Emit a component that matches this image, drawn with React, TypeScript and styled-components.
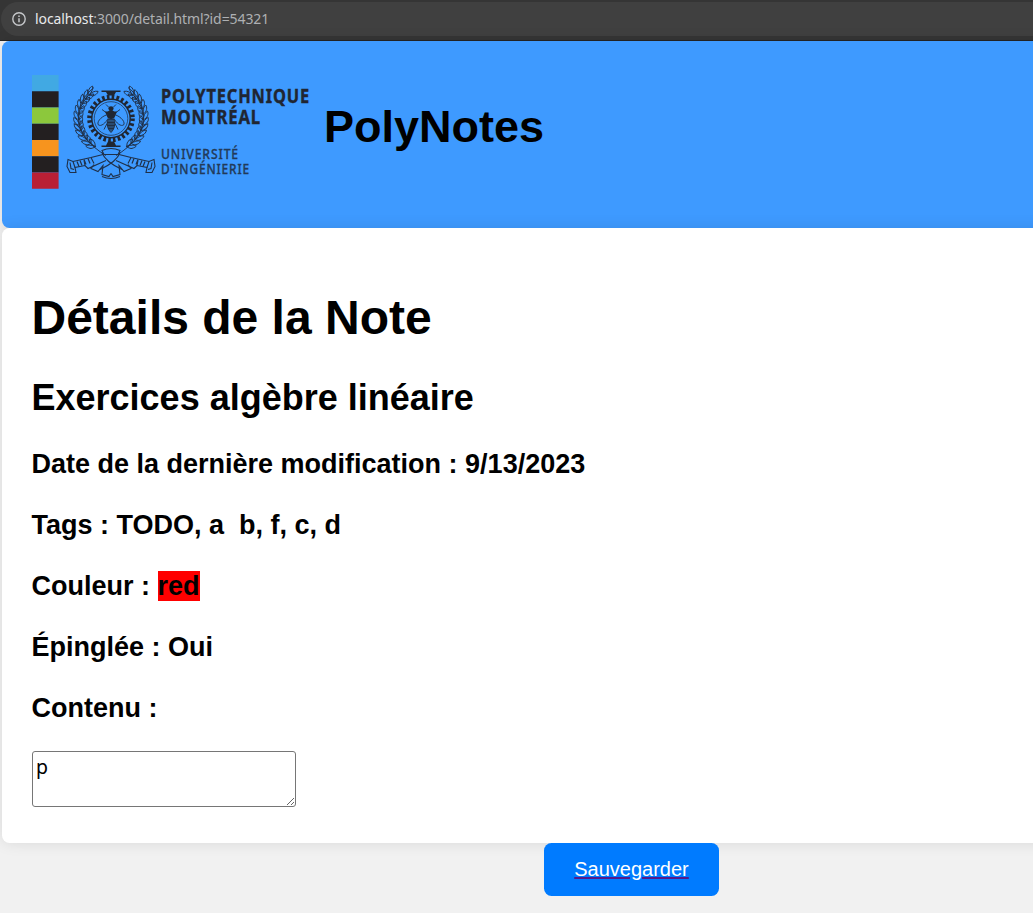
import React from "react";
import styled, { createGlobalStyle } from "styled-components";

const GlobalStyle = createGlobalStyle`
  html, body { margin: 0; padding: 0; }
  body {
    background: #f1f1f1;
    color: #000;
    font-family: "Liberation Sans", Arial, sans-serif;
    overflow: hidden;
  }
`;

const Window = styled.div`
  height: 913px;
  overflow: hidden;
  display: flex;
  flex-direction: column;
`;

const BrowserBar = styled.div`
  flex: none;
  height: 41px;
  box-sizing: border-box;
  padding: 2px 0 4px 1px;
  background: #353535;
  border-bottom: 1px solid #242424;
`;

const AddressField = styled.div`
  height: 34px;
  width: 1100px;
  box-sizing: border-box;
  padding-left: 11px;
  display: flex;
  align-items: center;
  gap: 9px;
  border-radius: 17px;
  background: #404040;
`;

const Url = styled.span`
  font: 14px/20px "Noto Sans", sans-serif;
  letter-spacing: -0.09px;
  color: #aeb0b3;
  white-space: nowrap;
`;

const Host = styled.span`
  color: #e8e9eb;
`;

const Page = styled.div`
  flex: none;
  width: 1259px;
  margin-left: 2px;
`;

const Header = styled.header`
  height: 187px;
  box-sizing: border-box;
  padding: 34px 30px 0;
  display: flex;
  align-items: flex-start;
  border-radius: 7.5px;
  background: #3e9aff;
  box-shadow: 0 0 15px rgba(0, 0, 0, 0.1);
`;

const Brand = styled.h1`
  margin: 26px 0 0 14px;
  font-size: 45px;
  line-height: 52px;
`;

const Card = styled.main`
  height: 615px;
  box-sizing: border-box;
  padding: 62px 30px 0 29.5px;
  border-radius: 7.5px;
  background: #fff;
  box-shadow: 0 0 15px rgba(0, 0, 0, 0.1);
`;

const Title = styled.h1`
  margin: 0 0 32px;
  font-size: 48px;
  line-height: 55px;
`;

const NoteName = styled.h2`
  margin: 0 0 31px;
  font-size: 36px;
  line-height: 41px;
`;

const Field = styled.h3`
  margin: 0 0 30px;
  font-size: 27px;
  line-height: 31px;
  white-space: pre;
`;

const Swatch = styled.span<{ $color: string }>`
  background: ${(p) => p.$color};
`;

const Content = styled.textarea`
  display: block;
  box-sizing: border-box;
  width: 264px;
  height: 56px;
  margin: -3px 0 0 0.5px;
  padding: 3px;
  border: 1px solid #767676;
  border-radius: 3px;
  background: #fff;
  color: #000;
  font: 19.5px/23px "Noto Sans", sans-serif;
  overflow: hidden;
  resize: both;
`;

const Actions = styled.div`
  display: flex;
  justify-content: center;
`;

const SaveButton = styled.button`
  position: relative;
  height: 53px;
  padding: 0 30px;
  border: 0;
  border-radius: 7.5px;
  background: #007bff;
  font: 20px/23px "Liberation Sans", Arial, sans-serif;
`;

const SaveLabel = styled.span`
  color: #fff;
  text-decoration: underline 2px #551a8b;
`;

const LogoSvg = styled.svg`
  flex: none;
  display: block;
  overflow: visible;
`;

const STRIPES = ["#41a9e3", "#231f20", "#8cc83c", "#231f20", "#f7941e", "#231f20", "#b91f35"];

function InfoIcon() {
  return (
    <svg width="14" height="14" viewBox="0 0 14 14" fill="none" stroke="#c5c7ca" strokeWidth="1.4">
      <circle cx="7" cy="7" r="6.2" />
      <path d="M7 6.2v4.1M7 3.5v1.5" strokeWidth="1.5" />
    </svg>
  );
}

function Laurel() {
  const leaves = Array.from({ length: 12 }, (_, i) => {
    const deg = 128 + i * 9.8;
    const a = (deg * Math.PI) / 180;
    const r = 32.5;
    return { x: r * Math.cos(a), y: -r * Math.sin(a), rot: 262 - deg };
  });
  return (
    <g fill="none" stroke="#1f3049" strokeWidth="0.9">
      <path d="M-17 -31C-40 -13 -39 17 -5 37" />
      {leaves.map((l, i) => (
        <g key={i} transform={`translate(${l.x} ${l.y}) rotate(${l.rot})`}>
          <path d="M3 0C1 -5 -4 -5.5 -6 -4C-4 -1 -1 0 3 0Z" />
          <path d="M3 0C1 4.500 -4 5 -6 3.500C-4 1 -1 0 3 0Z" />
        </g>
      ))}
    </g>
  );
}

function Scroll() {
  return (
    <g fill="none" stroke="#1f3049" strokeWidth="1.1">
      <path d="M-8 36L-20 39L-38 43L-43 41L-44 48L-41 54L-35 54L-36 49L-26 47L-23 50L-5 42" />
      <path d="M-38 43L-36 49M-20 39L-17 45M-26 47L-27 42M-41 44L-40 50L-37 51" />
      <path d="M-34 43l2 5m1-6l2 5m2-6l2 5m2-6l2 5" strokeWidth="1.2" />
      <path d="M-9 34C-7 40 -2 45 11 51M-17 46L-20 50L-13 53L-8 47L-9 56L-2 58L0 55" />
    </g>
  );
}

function Logo() {
  return (
    <LogoSvg width="278" height="114" viewBox="32 75 278 114" role="img">
      {STRIPES.map((c, i) => (
        <rect key={i} x="32" y={75 + i * 16.25} width="26.6" height="16.25" fill={c} />
      ))}
      <g transform="translate(111 118.5)">
        <Laurel />
        <g transform="scale(-1 1)">
          <Laurel />
        </g>
        <Scroll />
        <g transform="scale(-1 1)">
          <Scroll />
        </g>
        <path d="M-9 32Q0 28 9 32L7 36H-7ZM-9 58Q0 62 9 58" fill="none" stroke="#1f3049" strokeWidth="1.1" />
        <circle r="21.5" fill="none" stroke="#202632" strokeWidth="4.6" strokeDasharray="2.6 2.225" />
        <circle r="19.200" fill="none" stroke="#202632" strokeWidth="1.400" />
        <circle r="16.800" fill="none" stroke="#20395a" strokeWidth="0.8" />
        <g fill="#202632">
          <path d="M-9.500 -28H9.500V-26.400H5L3 -23H-3L-5 -26.400H-9.500Z" />
          <path d="M-9.500 28.500H9.500V27H5L3 23H-3L-5 27H-9.500Z" />
          <ellipse cy="-10" rx="2.6" ry="2.2" />
          <ellipse cy="-4" rx="3.8" ry="4.5" />
          <path d="M-6 -7H6L3 0H-3Z" />
        </g>
        <g fill="none" stroke="#202e42" strokeWidth="0.9">
          <path d="M-3 -4C-8 -3 -14 2 -13 6C-10 9 -5 4 -3 0" />
          <path d="M3 -4C8 -3 14 2 13 6C10 9 5 4 3 0" />
          <path d="M-2 -11L-5 -14M2 -11L5 -14M-5 -6L-9 -9M5 -6L9 -9M-4 5L-7 11M4 5L7 11" />
          <path d="M-3 1C-5 6 -3 11 0 14C3 11 5 6 3 1Z" fill="#2c547f" />
          <path d="M-4 4H4M-4 7H4M-3 10H3" strokeWidth="1.4" />
        </g>
      </g>
      <g fill="#202632" fontFamily="Noto Sans, sans-serif">
        <g fontWeight="700" fontSize="19.5" letterSpacing="1" stroke="#202632" strokeWidth="0.4">
          <text x="161" y="103" textLength="149" lengthAdjust="spacingAndGlyphs">POLYTECHNIQUE</text>
          <text x="161" y="123.500" textLength="100" lengthAdjust="spacingAndGlyphs">MONTRÉAL</text>
        </g>
        <g fill="#223a59" fontWeight="500" fontSize="14" letterSpacing="1" stroke="#223a59" strokeWidth="0.3">
          <text x="161" y="158.500" textLength="78" lengthAdjust="spacingAndGlyphs">UNIVERSITÉ</text>
          <text x="161" y="173.500" textLength="89" lengthAdjust="spacingAndGlyphs">D'INGÉNIERIE</text>
        </g>
      </g>
    </LogoSvg>
  );
}

export default function App() {
  return (
    <Window>
      <GlobalStyle />
      <BrowserBar>
        <AddressField>
          <InfoIcon />
          <Url>
            <Host>localhost</Host>:3000/detail.html?id=54321
          </Url>
        </AddressField>
      </BrowserBar>
      <Page>
        <Header>
          <Logo />
          <Brand>PolyNotes</Brand>
        </Header>
        <Card>
          <Title>Détails de la Note</Title>
          <NoteName>Exercices algèbre linéaire</NoteName>
          <Field>Date de la dernière modification : 9/13/2023</Field>
          <Field>{"Tags : TODO, a  b, f, c, d"}</Field>
          <Field>
            Couleur : <Swatch $color="red">red</Swatch>
          </Field>
          <Field>Épinglée : Oui</Field>
          <Field>Contenu :</Field>
          <Content defaultValue="p" spellCheck={false} />
        </Card>
        <Actions>
          <SaveButton>
            <SaveLabel>Sauvegarder</SaveLabel>
          </SaveButton>
        </Actions>
      </Page>
    </Window>
  );
}
